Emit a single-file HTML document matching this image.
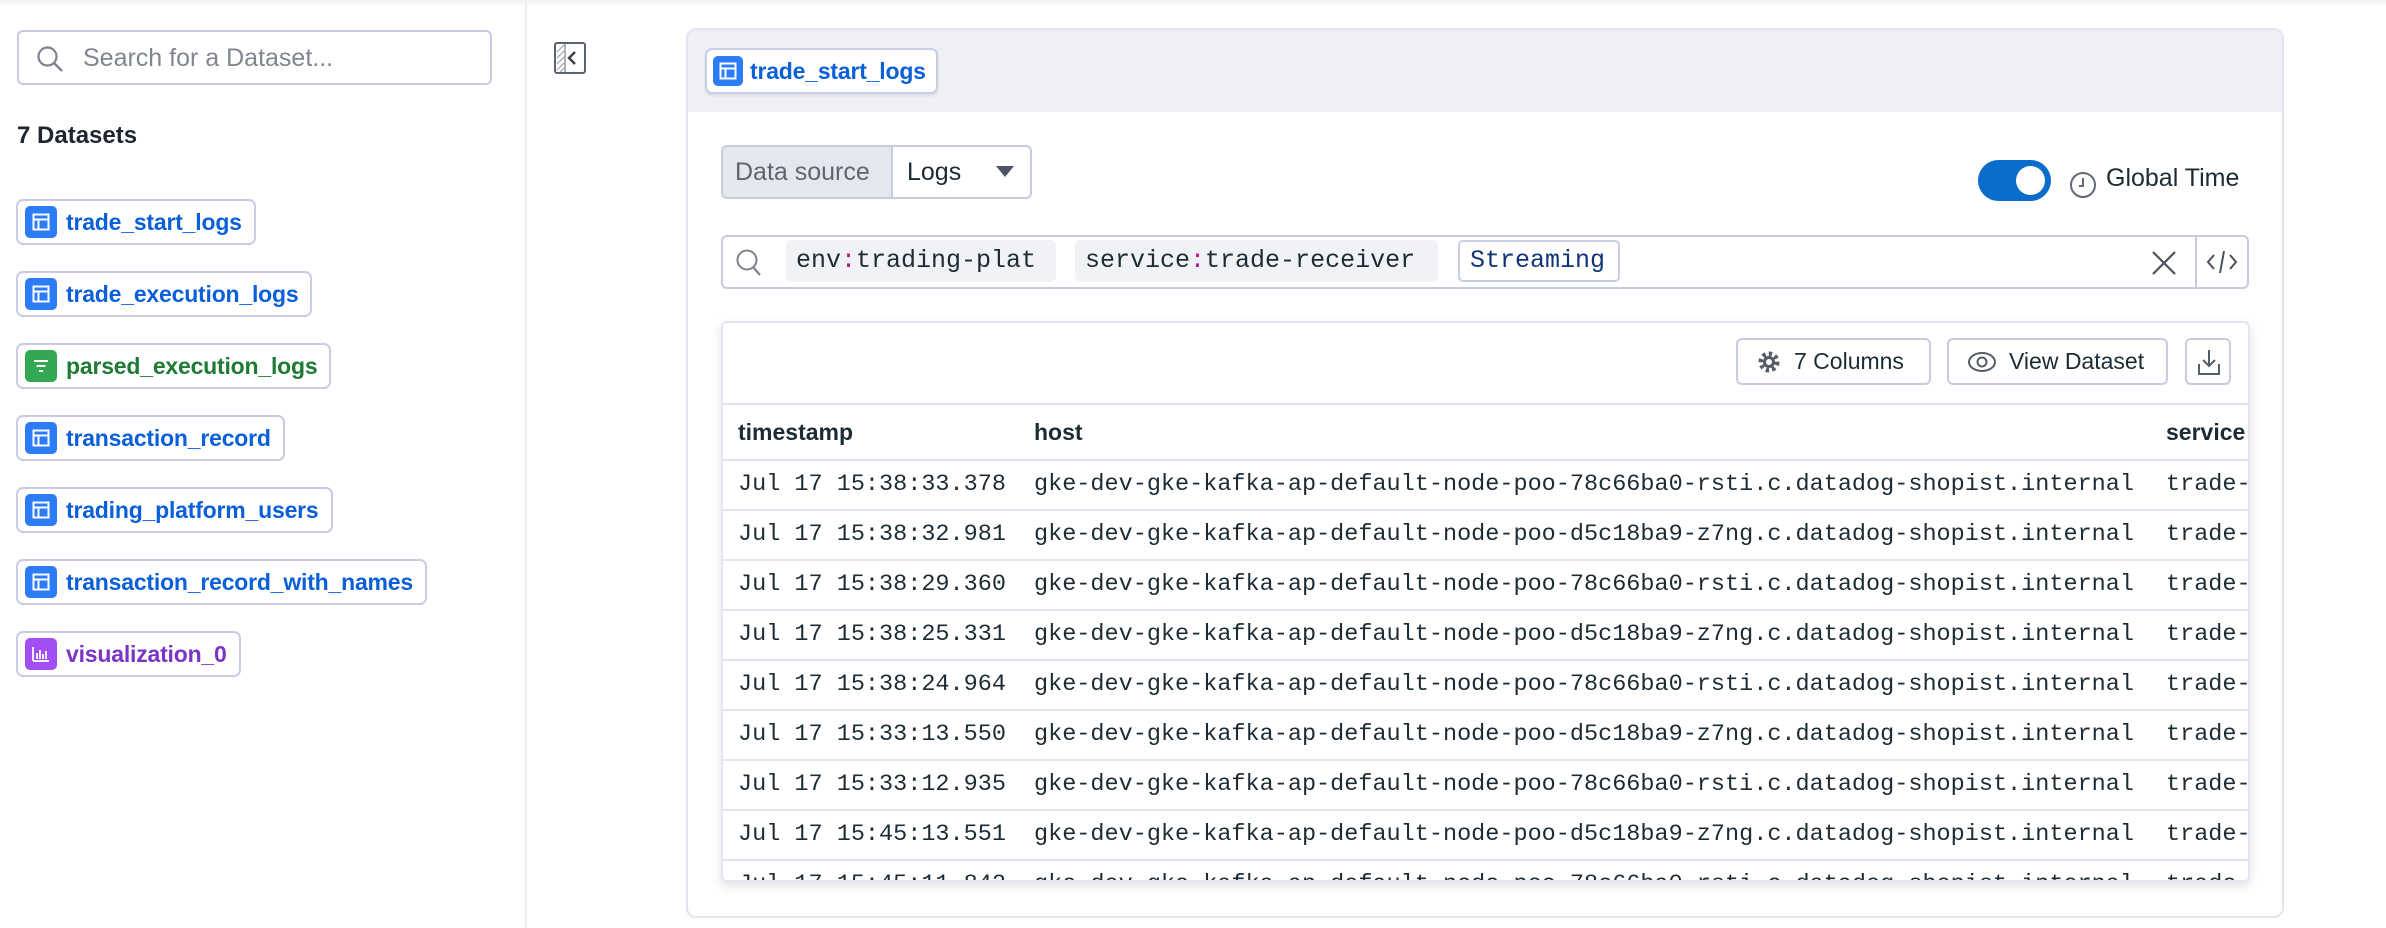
<!DOCTYPE html>
<html><head><meta charset="utf-8"><style>
*{box-sizing:border-box;margin:0;padding:0}
body{width:2386px;height:928px;background:#fff;font-family:"Liberation Sans",sans-serif;position:relative;overflow:hidden;color:#1c2b34}
.abs{position:absolute}
.topshade{left:0;top:0;width:2386px;height:6px;background:linear-gradient(#f0f0f2,#fff)}
.search{left:17px;top:30px;width:475px;height:55px;border:2px solid #c7cbe0;border-radius:6px}
.search span{position:absolute;left:64px;top:12px;font-size:25px;color:#80868f}
.chip{position:absolute;left:16px;height:46px;border:2px solid #c9cde3;border-radius:7px;background:#fff;display:flex;align-items:center;padding:0 12px 0 7px;font-size:23px;letter-spacing:-0.2px;font-weight:bold;color:#0b5fd9}
.ic{width:32px;height:32px;border-radius:5px;background:#2c7bf7;margin-right:9px;display:flex;align-items:center;justify-content:center}
.tag{position:absolute;top:240px;height:42px;background:#f1f2f5;border-radius:5px;font-size:25px;padding:0 10px;line-height:42px;font-family:"Liberation Mono",monospace}
.btn{position:absolute;top:338px;height:47px;border:2px solid #c7cbe0;border-radius:6px;background:#fff;font-size:23px;display:flex;align-items:center;padding-left:18px}
.row{position:absolute;left:0;width:1527px;height:50px;border-top:2px solid #e3e6ef;font-family:"Liberation Mono",monospace;font-size:23.5px;line-height:48px;white-space:nowrap}
.row span{position:absolute}
</style></head><body>
<div class="abs topshade"></div>
<div class="abs search">
<svg style="position:absolute;left:17px;top:13px" width="28" height="28" viewBox="0 0 28 28"><circle cx="11.5" cy="11.5" r="9" fill="none" stroke="#7d838c" stroke-width="2.2"/><line x1="18" y1="18" x2="26" y2="26" stroke="#7d838c" stroke-width="2.4"/></svg>
<span>Search for a Dataset...</span></div>
<div class="abs" style="left:17px;top:122px;font-size:24px;font-weight:bold;color:#1f2630">7 Datasets</div>

<div class="chip" style="top:199px"><div class="ic"><svg width="18" height="18" viewBox="0 0 18 18" fill="none" stroke="#fff" stroke-width="2"><rect x="1.5" y="1.5" width="15" height="15"/><line x1="1.5" y1="6.5" x2="16.5" y2="6.5"/><line x1="6.5" y1="6.5" x2="6.5" y2="16.5"/></svg></div>trade_start_logs</div>
<div class="chip" style="top:271px"><div class="ic"><svg width="18" height="18" viewBox="0 0 18 18" fill="none" stroke="#fff" stroke-width="2"><rect x="1.5" y="1.5" width="15" height="15"/><line x1="1.5" y1="6.5" x2="16.5" y2="6.5"/><line x1="6.5" y1="6.5" x2="6.5" y2="16.5"/></svg></div>trade_execution_logs</div>
<div class="chip" style="top:343px;color:#1f7a34"><div class="ic" style="background:#33a853"><svg width="18" height="18" viewBox="0 0 18 18" stroke="#fff" stroke-width="2"><line x1="2" y1="4" x2="16" y2="4"/><line x1="4.5" y1="9" x2="13.5" y2="9"/><line x1="7" y1="14" x2="11" y2="14"/></svg></div>parsed_execution_logs</div>
<div class="chip" style="top:415px"><div class="ic"><svg width="18" height="18" viewBox="0 0 18 18" fill="none" stroke="#fff" stroke-width="2"><rect x="1.5" y="1.5" width="15" height="15"/><line x1="1.5" y1="6.5" x2="16.5" y2="6.5"/><line x1="6.5" y1="6.5" x2="6.5" y2="16.5"/></svg></div>transaction_record</div>
<div class="chip" style="top:487px"><div class="ic"><svg width="18" height="18" viewBox="0 0 18 18" fill="none" stroke="#fff" stroke-width="2"><rect x="1.5" y="1.5" width="15" height="15"/><line x1="1.5" y1="6.5" x2="16.5" y2="6.5"/><line x1="6.5" y1="6.5" x2="6.5" y2="16.5"/></svg></div>trading_platform_users</div>
<div class="chip" style="top:559px"><div class="ic"><svg width="18" height="18" viewBox="0 0 18 18" fill="none" stroke="#fff" stroke-width="2"><rect x="1.5" y="1.5" width="15" height="15"/><line x1="1.5" y1="6.5" x2="16.5" y2="6.5"/><line x1="6.5" y1="6.5" x2="6.5" y2="16.5"/></svg></div>transaction_record_with_names</div>
<div class="chip" style="top:631px;color:#7a35c4"><div class="ic" style="background:#a24ef5"><svg width="20" height="18" viewBox="0 0 20 18" stroke="#fff" stroke-width="1.8"><line x1="2" y1="2" x2="2" y2="16"/><line x1="2" y1="16" x2="18" y2="16"/><line x1="6" y1="8" x2="6" y2="14"/><line x1="9" y1="5" x2="9" y2="14"/><line x1="12" y1="9" x2="12" y2="14"/><line x1="15" y1="6" x2="15" y2="14"/></svg></div>visualization_0</div>

<div class="abs" style="left:525px;top:0;width:2px;height:928px;background:#eceef3"></div>
<svg class="abs" style="left:554px;top:42px" width="32" height="32" viewBox="0 0 32 32"><rect x="1" y="1" width="30" height="30" rx="2" fill="#fff" stroke="#5c6370" stroke-width="2"/><path d="M3 10l7-7M3 16l7-7M3 22l7-7M3 28l7-7M6 30l4-4" stroke="#9aa0a8" stroke-width="1.2"/><line x1="11" y1="2" x2="11" y2="30" stroke="#5c6370" stroke-width="1"/><path d="M21 10l-6 6 6 6" fill="none" stroke="#3a4049" stroke-width="2.4"/></svg>

<div class="abs" style="left:686px;top:28px;width:1598px;height:890px;border:2px solid #e3e5ee;border-radius:10px;overflow:hidden;background:#fff">
 <div class="abs" style="left:0;top:0;width:100%;height:82px;background:#eff0f4"></div>
 <div class="abs" style="left:17px;top:18px;height:46px;border:2px solid #c9cde3;border-radius:7px;background:#fff;display:flex;align-items:center;padding:0 10px 0 6px;font-size:23px;letter-spacing:-0.2px;font-weight:bold;color:#0b5fd9;box-shadow:0 2px 3px rgba(0,0,0,.08)"><div class="ic" style="width:30px;height:30px;margin-right:7px"><svg width="18" height="18" viewBox="0 0 18 18" fill="none" stroke="#fff" stroke-width="2"><rect x="1.5" y="1.5" width="15" height="15"/><line x1="1.5" y1="6.5" x2="16.5" y2="6.5"/><line x1="6.5" y1="6.5" x2="6.5" y2="16.5"/></svg></div>trade_start_logs</div>

 <div class="abs" style="left:33px;top:115px;width:311px;height:54px;border:2px solid #c7cbe0;border-radius:6px;overflow:hidden;font-size:25px">
  <div class="abs" style="left:0;top:0;width:170px;height:50px;background:#e5e7ef;border-right:2px solid #c7cbe0;color:#5d6570;line-height:50px;padding-left:12px">Data source</div>
  <div class="abs" style="left:184px;top:0;line-height:50px;color:#1c2b34">Logs</div>
  <svg class="abs" style="left:273px;top:19px" width="18" height="12"><path d="M0 0h18L9 11z" fill="#4d5561"/></svg>
 </div>

 <div class="abs" style="left:1290px;top:130px;width:73px;height:41px;border-radius:21px;background:#0a6ccb"><div class="abs" style="left:38px;top:6px;width:29px;height:29px;border-radius:50%;background:#fff"></div></div>
 <svg class="abs" style="left:1380px;top:140px" width="30" height="30" viewBox="0 0 30 30"><circle cx="15" cy="15" r="12" fill="none" stroke="#626a74" stroke-width="2"/><path d="M15 8v8h-4" fill="none" stroke="#626a74" stroke-width="2"/></svg>
 <div class="abs" style="left:1418px;top:134px;font-size:25px;color:#1c2b34">Global Time</div>

 <div class="abs" style="left:33px;top:205px;width:1528px;height:54px;border:2px solid #c7cbe0;border-radius:6px">
  <svg class="abs" style="left:12px;top:11px" width="28" height="30" viewBox="0 0 28 30"><circle cx="12" cy="12" r="9.5" fill="none" stroke="#7d838c" stroke-width="2"/><line x1="18" y1="19" x2="25" y2="27" stroke="#7d838c" stroke-width="2.2"/></svg>
  <svg class="abs" style="left:1428px;top:13px" width="26" height="26"><path d="M2 2L24 24M24 2L2 24" stroke="#4a525c" stroke-width="2.2"/></svg>
  <div class="abs" style="left:1472px;top:0;width:2px;height:50px;background:#c7cbe0"></div>
  <svg class="abs" style="left:1483px;top:12px" width="32" height="26" viewBox="0 0 32 26"><path d="M8 6l-6 7 6 7M24 6l6 7-6 7M18 2l-4 22" fill="none" stroke="#4a525c" stroke-width="2"/></svg>
 </div>
 <div class="tag" style="left:98px;top:210px;width:270px"><span>env</span><span style="color:#c0148a">:</span><span>trading-plat</span></div>
 <div class="tag" style="left:387px;top:210px;width:363px"><span>service</span><span style="color:#c0148a">:</span><span>trade-receiver</span></div>
 <div class="tag" style="left:770px;top:210px;width:162px;background:#fff;border:2px solid #c9cde3;line-height:38px;color:#10337a">Streaming</div>

 <div class="abs" style="left:33px;top:291px;width:1529px;height:561px;border:2px solid #e3e6ef;border-radius:6px;overflow:hidden;background:#fff;box-shadow:0 4px 10px rgba(0,0,0,.12)">
  <div class="btn" style="left:1013px;top:15px;width:195px"><svg width="26" height="26" viewBox="0 0 26 26"><circle cx="13" cy="13" r="8" fill="none" stroke="#555d67" stroke-width="5" stroke-dasharray="3.2 3"/><circle cx="13" cy="13" r="6" fill="#555d67"/><circle cx="13" cy="13" r="3" fill="#fff"/></svg><span style="margin-left:12px">7 Columns</span></div>
  <div class="btn" style="left:1224px;top:15px;width:221px"><svg width="30" height="24" viewBox="0 0 30 24"><ellipse cx="15" cy="12" rx="13" ry="9" fill="none" stroke="#555d67" stroke-width="2"/><circle cx="15" cy="12" r="4.5" fill="none" stroke="#555d67" stroke-width="2"/></svg><span style="margin-left:12px">View Dataset</span></div>
  <div class="btn" style="left:1462px;top:15px;width:46px;padding-left:10px"><svg width="24" height="28" viewBox="0 0 24 28"><path d="M12 2v16M6 12l6 6 6-6M2 16v10h20V16" fill="none" stroke="#555d67" stroke-width="2"/></svg></div>
  <div class="row" style="top:80px;height:56px;font-family:'Liberation Sans',sans-serif;font-weight:bold;font-size:23px;line-height:54px"><span style="left:15px">timestamp</span><span style="left:311px">host</span><span style="left:1443px">service</span></div>
  <div class="row" style="top:136px"><span style="left:15px">Jul 17 15:38:33.378</span><span style="left:311px">gke-dev-gke-kafka-ap-default-node-poo-78c66ba0-rsti.c.datadog-shopist.internal</span><span style="left:1443px">trade-</span></div>
  <div class="row" style="top:186px"><span style="left:15px">Jul 17 15:38:32.981</span><span style="left:311px">gke-dev-gke-kafka-ap-default-node-poo-d5c18ba9-z7ng.c.datadog-shopist.internal</span><span style="left:1443px">trade-</span></div>
  <div class="row" style="top:236px"><span style="left:15px">Jul 17 15:38:29.360</span><span style="left:311px">gke-dev-gke-kafka-ap-default-node-poo-78c66ba0-rsti.c.datadog-shopist.internal</span><span style="left:1443px">trade-</span></div>
  <div class="row" style="top:286px"><span style="left:15px">Jul 17 15:38:25.331</span><span style="left:311px">gke-dev-gke-kafka-ap-default-node-poo-d5c18ba9-z7ng.c.datadog-shopist.internal</span><span style="left:1443px">trade-</span></div>
  <div class="row" style="top:336px"><span style="left:15px">Jul 17 15:38:24.964</span><span style="left:311px">gke-dev-gke-kafka-ap-default-node-poo-78c66ba0-rsti.c.datadog-shopist.internal</span><span style="left:1443px">trade-</span></div>
  <div class="row" style="top:386px"><span style="left:15px">Jul 17 15:33:13.550</span><span style="left:311px">gke-dev-gke-kafka-ap-default-node-poo-d5c18ba9-z7ng.c.datadog-shopist.internal</span><span style="left:1443px">trade-</span></div>
  <div class="row" style="top:436px"><span style="left:15px">Jul 17 15:33:12.935</span><span style="left:311px">gke-dev-gke-kafka-ap-default-node-poo-78c66ba0-rsti.c.datadog-shopist.internal</span><span style="left:1443px">trade-</span></div>
  <div class="row" style="top:486px"><span style="left:15px">Jul 17 15:45:13.551</span><span style="left:311px">gke-dev-gke-kafka-ap-default-node-poo-d5c18ba9-z7ng.c.datadog-shopist.internal</span><span style="left:1443px">trade-</span></div>
  <div class="row" style="top:536px"><span style="left:15px">Jul 17 15:45:11.842</span><span style="left:311px">gke-dev-gke-kafka-ap-default-node-poo-78c66ba0-rsti.c.datadog-shopist.internal</span><span style="left:1443px">trade-</span></div>
 </div>
</div>
</body></html>
